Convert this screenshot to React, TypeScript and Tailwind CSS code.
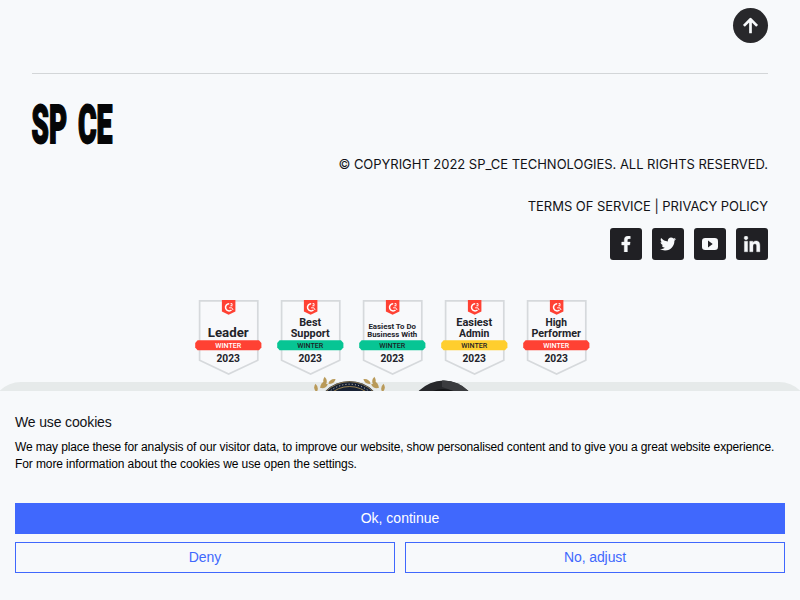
import React from "react";
import { FaFacebookF, FaTwitter, FaLinkedinIn } from "react-icons/fa";

type Badge = { lines: string[]; size: number; widths: number[]; baselines: number[]; color: string; ink: string };

const badges: Badge[] = [
  { lines: ["Leader"], size: 12.6, widths: [41], baselines: [36.8], color: "#ff4133", ink: "#ffffff" },
  { lines: ["Best", "Support"], size: 10.5, widths: [22, 39], baselines: [26.3, 37], color: "#07c594", ink: "#1d1e24" },
  { lines: ["Easiest To Do", "Business With"], size: 7.3, widths: [47.5, 50], baselines: [29, 37], color: "#07c594", ink: "#1d1e24" },
  { lines: ["Easiest", "Admin"], size: 10.5, widths: [36, 30.5], baselines: [26.3, 37], color: "#ffce2e", ink: "#1d1e24" },
  { lines: ["High", "Performer"], size: 10.5, widths: [21.5, 49.5], baselines: [26.3, 37], color: "#ff4133", ink: "#ffffff" },
];

function AwardBadge({ badge }: { badge: Badge }) {
  return (
    <svg width="68" height="76" viewBox="-0.6 0 68 76" fontFamily="Roboto, sans-serif" textAnchor="middle">
      <path d="M5 .9H63.2V60.3L34 74L5 60.3Z" fill="#f8f9fb" stroke="#d6d9dc" strokeWidth="1.7" />
      <path d="M27.3 0h13.5v11.4L34 14.7l-6.7-3.3Z" fill="#ff4133" />
      <path d="M34.6 3.7a3.6 3.6 0 1 0 2.3 6.3" fill="none" stroke="#fff" strokeWidth="1.5" />
      <path d="M35.9 3.7q2-.7 1.8.5q0 .7-1.7 1.6h2M34.5 7.8h2.7l1.3 2.2" fill="none" stroke="#fff" strokeWidth=".9" />
      {badge.lines.map((line, i) => (
        <text key={line} x="33.6" y={badge.baselines[i]} fontSize={badge.size} fontWeight="700" fill="#22232a"
          textLength={badge.widths[i]} lengthAdjust="spacingAndGlyphs">{line}</text>
      ))}
      <path d="M3 40.2H64.4L66.8 43v4.4L64.4 50.2H3L.6 47.4V43Z" fill={badge.color} />
      <text x="33.6" y="47.8" fontSize="7.1" fontWeight="500" fill={badge.ink} textLength="26" lengthAdjust="spacingAndGlyphs">WINTER</text>
      <text x="33.6" y="62" fontSize="10.5" fontWeight="700" fill="#22232a" textLength="23.5" lengthAdjust="spacingAndGlyphs">2023</text>
    </svg>
  );
}

const leaves = [
  { x: 316, y: 388, r: -8 },
  { x: 323, y: 384.5, r: 35 },
  { x: 325, y: 381, r: -5 },
  { x: 332, y: 381.5, r: 58 },
  { x: 324, y: 386, r: 65 },
];

function Leaf({ x, y, r }: { x: number; y: number; r: number }) {
  return <path d="M0-4.3Q3.6 0 0 4.3Q-3.6 0 0-4.3Z" transform={`translate(${x} ${y}) rotate(${r})`} />;
}

function Medals() {
  return (
    <svg className="block w-full" height="16" viewBox="0 375 800 16">
      <g fill="#b99a59">
        {leaves.map((l) => <Leaf key={`l${l.x}-${l.y}`} {...l} />)}
        <g transform="translate(699 0) scale(-1 1)">
          {leaves.map((l) => <Leaf key={`r${l.x}-${l.y}`} {...l} />)}
        </g>
      </g>
      <circle cx="349.5" cy="415" r="34" fill="#172133" />
      <circle cx="349.5" cy="415" r="33.3" fill="none" stroke="#b99a59" strokeWidth=".7" />
      <circle cx="349.5" cy="415" r="30.8" fill="none" stroke="#d5d3c6" strokeWidth="1" strokeDasharray="1 2.2" />
      <circle cx="349.5" cy="415" r="28.5" fill="none" stroke="#b99a59" strokeWidth=".8" />
      <circle cx="443.5" cy="415" r="34.5" fill="#27282b" />
      <path d="M442 380.5a34.5 34.5 0 0 1 27 11H455L442 387Z" fill="#3b3c3f" />
      <path d="M433 391q10-4 20 0Z" fill="#151618" />
    </svg>
  );
}

function ArrowUp() {
  return (
    <svg width="17" height="17" viewBox="0 0 17 17" fill="none" stroke="currentColor" strokeWidth="2.7">
      <path d="M1.9 8.9L8.5 2.3L15.1 8.9M8.5 2.8V16.3" strokeLinejoin="round" />
    </svg>
  );
}

function YoutubeIcon() {
  return (
    <svg width="16" height="16" viewBox="0 0 16 16">
      <rect x="0" y="2" width="16" height="12" rx="3.2" fill="currentColor" />
      <path d="M6 4.6L10.7 8L6 11.4Z" fill="#202024" />
    </svg>
  );
}

const social = [
  { label: "Facebook", icon: <FaFacebookF size={16} stroke="currentColor" strokeWidth={12} /> },
  { label: "Twitter", icon: <FaTwitter size={16} /> },
  { label: "YouTube", icon: <YoutubeIcon /> },
  { label: "LinkedIn", icon: <FaLinkedinIn size={18} className="mt-px" stroke="currentColor" strokeWidth={10} /> },
];

export default function App() {
  return (
    <div className="relative h-[600px] w-[800px] overflow-hidden bg-[#f7f9fb] font-['Liberation_Sans',Arial,sans-serif] text-[#111216]">
      <footer className="flex flex-col">
        <div className="mx-8 flex h-[74px] justify-end border-b border-[#d3d6d8] pt-2">
          <button aria-label="Back to top" className="flex size-[35px] items-center justify-center rounded-full bg-[#28282b] text-[#f7f9fb]">
            <ArrowUp />
          </button>
        </div>
        <div className="mx-8 pt-[30px]">
          <svg className="overflow-visible" width="81" height="41" viewBox="0 0 81 41" fontFamily="Roboto, sans-serif" fontWeight="900" fontSize="53" fill="#050607" stroke="#050607" strokeWidth="1.8">
            <g transform="scale(.5 1)">
              <text x="-1" y="38.8" textLength="71" lengthAdjust="spacingAndGlyphs">SP</text>
              <text x="92" y="38.8" textLength="69" lengthAdjust="spacingAndGlyphs">CE</text>
            </g>
          </svg>
        </div>
        <div className="mx-8 flex flex-col items-end pt-[9px] font-[Inter,'Liberation_Sans',sans-serif] text-[13px] leading-[21px] tracking-[-0.035px]">
          <p className="whitespace-nowrap">© COPYRIGHT 2022 SP_CE TECHNOLOGIES. ALL RIGHTS RESERVED.</p>
          <p className="mt-[21px] whitespace-nowrap">TERMS OF SERVICE | PRIVACY POLICY</p>
          <div className="mt-[11px] flex gap-[10px]">
            {social.map(({ label, icon }) => (
              <a key={label} aria-label={label} className="flex size-8 items-center justify-center rounded-[3px] bg-[#202024] text-[#f7f9fb]">
                {icon}
              </a>
            ))}
          </div>
        </div>
        <div className="ml-[194px] mt-10 flex gap-[14px]">
          {badges.map((badge) => <AwardBadge key={badge.lines.join(" ")} badge={badge} />)}
        </div>
      </footer>
      <div className="absolute left-[-9px] top-[382px] h-[60px] w-[818px] rounded-t-[30px] bg-[#e6eaea]" />
      <div className="absolute left-0 top-[375px] w-full"><Medals /></div>
      <section className="absolute inset-x-0 bottom-0 flex h-[209px] flex-col bg-[#f7f9fb] px-[15px] pt-[21px]">
        <h2 className="text-[14px] leading-5 tracking-[-0.14px]">We use cookies</h2>
        <p className="mt-[7px] whitespace-nowrap text-[12px] leading-[17px] text-black">
          <span className="tracking-[-0.135px]">We may place these for analysis of our visitor data, to improve our website, show personalised content and to give you a great website experience.</span>
          <br />
          <span className="tracking-[-0.1px]">For more information about the cookies we use open the settings.</span>
        </p>
        <button className="mt-[30px] h-[31px] bg-[#4068fd] text-[14px] text-white">Ok, continue</button>
        <div className="mt-2 grid grid-cols-2 gap-[10px] text-[14px] text-[#4068fd]">
          <button className="h-[31px] border border-[#4068fd]">Deny</button>
          <button className="h-[31px] border border-[#4068fd] tracking-[-0.1px]">No, adjust</button>
        </div>
      </section>
    </div>
  );
}
